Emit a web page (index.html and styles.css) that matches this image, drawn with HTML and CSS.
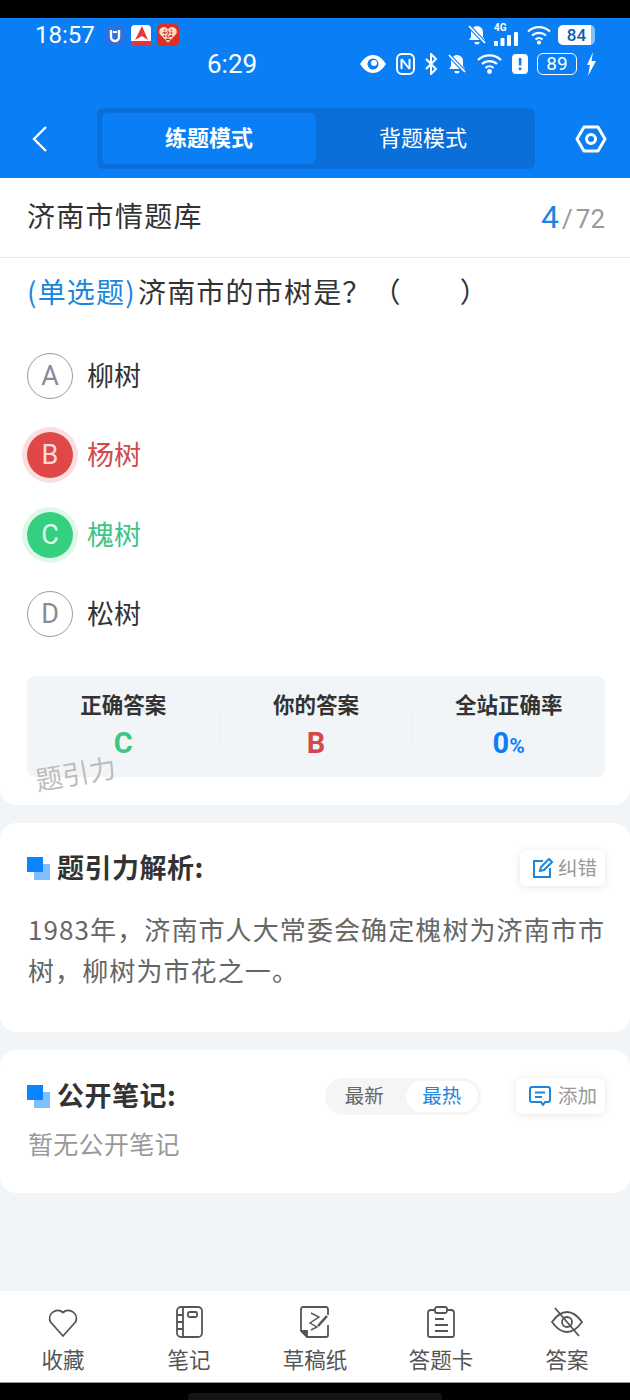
FILE: index.html
```html
<!DOCTYPE html>
<html lang="zh">
<head>
    <meta charset="UTF-8">
    <meta name="viewport" content="width=device-width, initial-scale=1.0">
    <title>济南市情题库</title>
    <link rel="stylesheet" href="styles.css">
</head>
<body>
    <div class="bar-black"></div>

    <header class="header">
        <div class="status status-one">
            <span class="time">18:57</span>
            <svg class="app" viewBox="0 0 20 20"><rect width="20" height="20" rx="5" fill="#2f6fe0"/><path d="M6 5v7a4 4 0 0 0 8 0V5" fill="none" stroke="#fff" stroke-width="2.4"/><path d="M8 7h4" stroke="#fff" stroke-width="2"/></svg>
            <svg class="app" viewBox="0 0 20 20"><rect width="20" height="20" rx="4" fill="#fff"/><path d="M11 1l6 14-6-4-7 4z" fill="#e8343c"/><rect y="16" width="20" height="4" fill="#e8343c"/></svg>
            <svg class="app app-wide" viewBox="0 0 20 20"><rect width="20" height="20" rx="4" fill="#dc2f22"/><path d="M10 17L2.500 9a4 4 0 0 1 7.500-4 4 4 0 0 1 7.500 4z" fill="#f8dcc8"/><path d="M5 8h10M6 11h8M8 14h4M7 5v7M10 6v10M13 5v7" stroke="#c0281c" stroke-dasharray="1.500 1"/></svg>
            <span class="spacer"></span>
            <svg class="ico bell-one" width="20" height="22" viewBox="0 0 20 22"><path d="M10 2a6 6 0 0 0-6 6v5l-2 3h16l-2-3V8a6 6 0 0 0-6-6zM7.500 18a2.500 2.500 0 0 0 5 0z" fill="#fff"/><path d="M2 2l16 17" stroke="#0a7ff5" stroke-width="4"/><path d="M2 2l16 17" stroke="#fff" stroke-width="1.800"/></svg>
            <span class="signal">
                <span class="net">4G</span>
                <svg width="24" height="14" viewBox="0 0 24 14" fill="#fff"><rect y="9" width="4" height="5" rx="1"/><rect x="6.500" y="6" width="4" height="8" rx="1"/><rect x="13" y="3" width="4" height="11" rx="1"/><rect x="20" y="0" width="4" height="14" rx="1"/></svg>
            </span>
            <svg class="ico" width="26" height="20" viewBox="0 0 26 20" fill="none" stroke="#fff" stroke-width="2.200"><path d="M2 6.500a16 16 0 0 1 22 0"/><path d="M6 10.500a10.500 10.500 0 0 1 14 0"/><path d="M9.500 14.500a5 5 0 0 1 7 0"/><circle cx="13" cy="17.500" r="1" fill="#fff"/></svg>
            <span class="batt-one">84</span>
        </div>

        <div class="status status-two">
            <span class="time-two">6:29</span>
            <span class="spacer"></span>
            <svg class="ico" width="28" height="20" viewBox="0 0 28 20"><path d="M1 10c4-6 8-9 13-9s9 3 13 9c-4 6-8 9-13 9S5 16 1 10z" fill="#fff"/><circle cx="14" cy="10" r="5.500" fill="#0a7ff5"/><circle cx="15" cy="9" r="3" fill="#fff"/></svg>
            <svg class="ico" width="19" height="22" viewBox="0 0 19 22"><rect x="1" y="1" width="17" height="20" rx="5" fill="none" stroke="#fff" stroke-width="2"/><path d="M5.500 6v10M13.500 6v10M5.500 6l8 10" fill="none" stroke="#fff" stroke-width="2"/></svg>
            <svg class="ico" width="14" height="22" viewBox="0 0 14 22" fill="none" stroke="#fff" stroke-width="2"><path d="M2 6l10 10-5 5V1l5 5L2 16"/></svg>
            <svg class="ico" width="20" height="22" viewBox="0 0 20 22"><path d="M10 2a6 6 0 0 0-6 6v5l-2 3h16l-2-3V8a6 6 0 0 0-6-6zM7.500 18a2.500 2.500 0 0 0 5 0z" fill="#fff"/><path d="M2 2l16 17" stroke="#0a7ff5" stroke-width="4"/><path d="M2 2l16 17" stroke="#fff" stroke-width="1.800"/></svg>
            <svg class="ico" width="27" height="22" viewBox="0 0 27 22" fill="none" stroke="#fff" stroke-width="2.200"><path d="M2 7a16.500 16.500 0 0 1 23 0"/><path d="M6 11a11 11 0 0 1 15 0"/><path d="M9.500 15a5.500 5.500 0 0 1 8 0"/><circle cx="13.500" cy="18.500" r="1.300" fill="#fff"/></svg>
            <svg class="ico" width="16" height="20" viewBox="0 0 16 20"><path d="M4 0h8a4 4 0 0 1 4 4v12a4 4 0 0 1-4 4H4a4 4 0 0 1-4-4V4a4 4 0 0 1 4-4z" fill="#fff"/><rect x="6.800" y="4" width="2.600" height="7.500" fill="#0a7ff5"/><rect x="6.800" y="13.500" width="2.600" height="2.600" fill="#0a7ff5"/></svg>
            <span class="batt-two">89</span>
            <svg class="bolt" width="12" height="24" viewBox="0 0 12 24"><path d="M8 0L2 13h3l-2 11 8-15H6.500z" fill="#fff"/></svg>
        </div>

        <nav class="nav">
            <svg class="back" width="17" height="28" viewBox="0 0 17 28" fill="none" stroke="#fff" stroke-width="2.400"><path d="M15 2L3 14l12 12"/></svg>
            <div class="mode">
                <div class="mode-item active">练题模式</div>
                <div class="mode-item">背题模式</div>
            </div>
            <svg class="gear" width="32" height="28" viewBox="0 0 32 28" fill="none" stroke="#fff" stroke-width="3"><path d="M9 2h14l7 12-7 12H9L2 14z" stroke-linejoin="round"/><circle cx="16" cy="14" r="4.500"/></svg>
        </nav>
    </header>

    <main class="content">
        <section class="card card-question">
            <div class="title-row">
                <span class="title">济南市情题库</span>
                <span class="count"><b>4</b><i>/</i>72</span>
            </div>
            <p class="question"><span class="qtype">(单选题)</span>济南市的市树是？<span class="blank">（</span><span class="blank-end">）</span></p>

            <div class="option">
                <span class="letter">A</span><span class="opt-text">柳树</span>
            </div>
            <div class="option wrong">
                <span class="letter">B</span><span class="opt-text">杨树</span>
            </div>
            <div class="option right">
                <span class="letter">C</span><span class="opt-text">槐树</span>
            </div>
            <div class="option">
                <span class="letter">D</span><span class="opt-text">松树</span>
            </div>

            <div class="result">
                <div class="result-col">
                    <span class="result-label">正确答案</span>
                    <span class="result-value green">C</span>
                </div>
                <div class="result-col">
                    <span class="result-label">你的答案</span>
                    <span class="result-value red">B</span>
                </div>
                <div class="result-col">
                    <span class="result-label">全站正确率</span>
                    <span class="result-value blue">0<small>%</small></span>
                </div>
                <span class="watermark">题引力</span>
            </div>
        </section>

        <section class="card card-analysis">
            <div class="head">
                <span class="squares"></span>
                <h2>题引力解析:</h2>
                <span class="spacer"></span>
                <span class="mini-btn">
                    <svg width="21" height="21" viewBox="0 0 21 21" fill="none" stroke="#1c86dc" stroke-width="2"><path d="M11 3H2v16h16v-9"/><path d="M8 13l1-4 8-8 3 3-8 8z"/></svg>
                    <span class="mini-label">纠错</span>
                </span>
            </div>
            <p class="analysis">1983年，济南市人大常委会确定槐树为济南市市树，柳树为市花之一。</p>
        </section>

        <section class="card card-notes">
            <div class="head">
                <span class="squares"></span>
                <h2>公开笔记:</h2>
                <span class="spacer"></span>
                <div class="sort">
                    <span class="sort-item">最新</span>
                    <span class="sort-item on">最热</span>
                </div>
                <span class="mini-btn add-btn">
                    <svg width="22" height="20" viewBox="0 0 22 20" fill="none" stroke="#1c86dc" stroke-width="2"><path d="M3 1h16a2 2 0 0 1 2 2v11a2 2 0 0 1-2 2h-3l-2 3-2-3H3a2 2 0 0 1-2-2V3a2 2 0 0 1 2-2z"/><path d="M6 6.500h10M6 11h7"/></svg>
                    <span class="mini-label">添加</span>
                </span>
            </div>
            <p class="empty">暂无公开笔记</p>
        </section>
    </main>

    <footer class="tabbar">
        <div class="tab">
            <svg width="32" height="32" viewBox="0 0 32 32" fill="none" stroke="#555" stroke-width="1.800"><path d="M16 30L3.500 16A8 8 0 0 1 16 6.500 8 8 0 0 1 28.500 16z" stroke-linejoin="round"/></svg>
            <span>收藏</span>
        </div>
        <div class="tab">
            <svg width="32" height="32" viewBox="0 0 32 32" fill="none" stroke="#555" stroke-width="1.800"><rect x="4" y="1" width="25" height="30" rx="4"/><path d="M10 1v30M4 9h6M4 16h6M4 23h6"/><rect x="15" y="6" width="9" height="5" rx="1.500"/></svg>
            <span>笔记</span>
        </div>
        <div class="tab">
            <svg width="32" height="32" viewBox="0 0 32 32" fill="none" stroke="#555" stroke-width="1.800"><path d="M29 9V3a2 2 0 0 0-2-2H4a2 2 0 0 0-2 2v22l6 6h19a2 2 0 0 0 2-2V19"/><path d="M3 25h5v5z" fill="#555"/><path d="M12 7l8 4-9 6 7 4-6 3" stroke-width="1.400"/><path d="M19 20l9-10" stroke-width="2.600"/></svg>
            <span>草稿纸</span>
        </div>
        <div class="tab">
            <svg width="32" height="32" viewBox="0 0 32 32" fill="none" stroke="#555" stroke-width="1.800"><path d="M10 4H6a3 3 0 0 0-3 3v22a2 2 0 0 0 2 2h22a2 2 0 0 0 2-2V7a3 3 0 0 0-3-3h-4"/><rect x="10" y="1" width="12" height="6" rx="2"/><path d="M10 13h9M10 19h13M10 25h13"/></svg>
            <span>答题卡</span>
        </div>
        <div class="tab">
            <svg width="34" height="32" viewBox="0 0 34 32" fill="none" stroke="#555" stroke-width="1.800"><path d="M2 16C7 9 11 6 17 6s10 3 15 10c-5 7-9 10-15 10S7 23 2 16z"/><circle cx="17" cy="16" r="5"/><path d="M5 2l24 28"/></svg>
            <span>答案</span>
        </div>
    </footer>

    <div class="bar-bottom"><span class="home"></span></div>
</body>
</html>
```

FILE: styles.css
```css
* {
    box-sizing: border-box;
}

body {
    margin: 0;
    width: 630px;
    height: 1400px;
    display: flex;
    flex-direction: column;
    background-color: #f2f5f8;
    font-family: "Noto Sans CJK SC", "Noto Sans", sans-serif;
    color: #333;
    overflow: hidden;
}

svg {
    display: block;
    flex-shrink: 0;
}

.spacer {
    flex: 1;
}

.bar-black {
    height: 18px;
    background-color: #000;
}

.header {
    height: 160px;
    background-color: #0a7ff5;
    color: #fff;
}

.status {
    display: flex;
    align-items: center;
}

.status-one {
    height: 32px;
    padding: 1px 35px 0 35px;
    gap: 6px;
}

.time {
    font-family: Roboto, sans-serif;
    font-size: 24px;
    margin-right: 4px;
}

.app {
    width: 20px;
    height: 20px;
}

.app-wide {
    width: 22px;
    height: 22px;
}

.bell-one {
    margin-right: 0;
}

.signal {
    display: flex;
    flex-direction: column;
    align-items: flex-start;
    margin: 0 2px 0 1px;
}

.net {
    font-family: Roboto, sans-serif;
    font-size: 10px;
    font-weight: 700;
    line-height: 8px;
}

.batt-one {
    width: 37px;
    height: 20px;
    border-radius: 5px;
    background: linear-gradient(90deg, #fff 90%, rgba(255, 255, 255, 0.5) 90%);
    color: #0a5cb5;
    font-family: Roboto, sans-serif;
    font-size: 17px;
    font-weight: 500;
    line-height: 20px;
    text-align: center;
}

.status-two {
    height: 28px;
    padding: 0 33px 0 207px;
    gap: 9px;
}

.time-two {
    font-family: Roboto, sans-serif;
    font-size: 26px;
}

.batt-two {
    width: 40px;
    height: 22px;
    border: 1.5px solid #fff;
    border-radius: 6px;
    font-family: Roboto, sans-serif;
    font-size: 19px;
    line-height: 19px;
    text-align: center;
}

.bolt {
    margin-left: -1px;
}

.nav {
    display: flex;
    align-items: center;
    height: 61px;
    margin-top: 30px;
    padding: 0 23px 0 31px;
}

.back {
    margin-right: 49px;
}

.mode {
    display: flex;
    width: 438px;
    height: 61px;
    padding: 5px;
    border-radius: 6px;
    background-color: #0a6fd8;
}

.mode-item {
    width: 214px;
    border-radius: 6px;
    font-size: 22px;
    line-height: 46px;
    text-align: center;
}

.mode-item.active {
    background-color: #0a7ff5;
    font-weight: 700;
}

.gear {
    margin-left: auto;
}

.content {
    flex: 1;
}

.card {
    background-color: #fff;
    border-radius: 16px;
}

.card-question {
    height: 627px;
    border-radius: 0 0 16px 16px;
}

.title-row {
    display: flex;
    justify-content: space-between;
    align-items: center;
    height: 80px;
    padding: 0 25px 0 27px;
    border-bottom: 1px solid #e6e6e6;
}

.title {
    margin-bottom: 5px;
    font-size: 28px;
    letter-spacing: 1.3px;
}

.count {
    margin-bottom: 2px;
    font-family: Roboto, sans-serif;
    font-size: 26px;
    color: #999;
}

.count b {
    font-size: 32px;
    font-weight: 400;
    color: #1c86dc;
}

.count i {
    margin: 0 3px;
    font-style: normal;
}

.question {
    height: 78px;
    margin: 0;
    padding: 13px 27px 0;
    font-size: 28px;
    line-height: 40px;
    letter-spacing: 1.2px;
    white-space: nowrap;
}

.qtype {
    margin-right: 2px;
    color: #1c86dc;
}

.blank {
    margin-left: 1px;
}

.blank-end {
    margin-left: 58px;
}

.option {
    display: flex;
    align-items: center;
    height: 79.5px;
    padding-left: 27px;
    font-size: 27px;
}

.opt-text {
    margin-bottom: 3px;
}

.letter {
    width: 46px;
    height: 46px;
    margin-right: 14px;
    border: 1.5px solid #9a9aa8;
    border-radius: 50%;
    color: #8a8a98;
    font-family: Roboto, sans-serif;
    font-size: 27px;
    line-height: 45px;
    text-align: center;
}

.wrong .letter {
    border: 0;
    background-color: #e04848;
    box-shadow: 0 0 0 5px #f9dfdf;
    color: #fbdcdc;
    line-height: 47px;
}

.wrong .opt-text {
    color: #d04a4a;
}

.right .letter {
    border: 0;
    background-color: #35d07f;
    box-shadow: 0 0 0 5px #dff8ea;
    color: #e0fbee;
    line-height: 47px;
}

.right .opt-text {
    color: #3cc583;
}

.result {
    position: relative;
    display: flex;
    height: 101px;
    margin: 22px 25px 0 27px;
    border-radius: 8px;
    background-color: #f2f5f8;
}

.result-col {
    flex: 1;
    display: flex;
    flex-direction: column;
    align-items: center;
    padding-top: 12px;
}

.result-col + .result-col {
    background: linear-gradient(#e9edf1, #e9edf1) 0 35px / 1px 36px no-repeat;
}

.result-label {
    font-size: 21.5px;
    font-weight: 700;
    line-height: 32px;
}

.result-value {
    margin-top: 5px;
    font-family: Roboto, sans-serif;
    font-size: 29px;
    font-weight: 700;
    line-height: 36px;
}

.result-value small {
    font-size: 21px;
}

.green {
    color: #3cc583;
}

.red {
    color: #d04a4a;
}

.blue {
    color: #0a7ff5;
}

.watermark {
    position: absolute;
    left: 8px;
    top: 82px;
    color: #bdbdbd;
    font-size: 27px;
    line-height: 30px;
    transform: rotate(-10deg);
}

.card-analysis {
    height: 209px;
    margin-top: 18px;
    padding: 27px 25px 0 27px;
}

.card-notes {
    height: 143px;
    margin-top: 18px;
    padding: 28px 25px 0 27px;
}

.head {
    display: flex;
    align-items: center;
    height: 36px;
}

.head h2 {
    margin: 0 0 2px 7px;
    font-size: 27px;
    font-weight: 700;
    line-height: 36px;
    letter-spacing: .5px;
}

.squares {
    width: 23px;
    height: 23px;
    background: linear-gradient(#0a84ff, #0a84ff) 0 0 / 16px 15px no-repeat,
        linear-gradient(#7fbfff, #7fbfff) 7px 7px / 16px 16px no-repeat;
}

.mini-btn {
    display: flex;
    align-items: center;
    gap: 5px;
    width: 85px;
    height: 36px;
    padding-left: 12px;
    border-radius: 6px;
    background-color: #fff;
    box-shadow: 0 1px 8px rgba(0, 0, 0, 0.1);
    color: #999;
    font-size: 19.5px;
}

.mini-label {
    margin-bottom: 3px;
}

.analysis {
    margin: 22px -6px 0 1px;
    color: #666;
    font-size: 26px;
    line-height: 41px;
    letter-spacing: 1.1px;
}

.sort {
    display: flex;
    width: 156px;
    height: 37px;
    margin-right: 35px;
    padding: 3px;
    border-radius: 19px;
    background-color: #f5f5f5;
}

.sort-item {
    flex: 1;
    padding-right: 5px;
    border-radius: 16px;
    color: #666;
    font-size: 19.5px;
    line-height: 28px;
    text-align: center;
}

.sort-item.on {
    padding-right: 0;
    background-color: #fff;
    color: #1c86dc;
}

.add-btn {
    width: 89px;
    gap: 7px;
    padding-left: 13px;
}

.empty {
    margin: 11px 0 0 1px;
    color: #999;
    font-size: 25px;
    line-height: 36px;
    letter-spacing: .3px;
}

.tabbar {
    display: flex;
    height: 92px;
    background-color: #fff;
    border-bottom: 1px solid #999;
}

.tab {
    flex: 1;
    display: flex;
    flex-direction: column;
    align-items: center;
    justify-content: flex-end;
    gap: 6px;
    padding-bottom: 8px;
    color: #555;
    font-size: 21.5px;
    line-height: 30px;
}

.bar-bottom {
    display: flex;
    justify-content: center;
    align-items: flex-end;
    height: 17px;
    background-color: #000;
}

.home {
    width: 254px;
    height: 7px;
    border-radius: 4px 4px 0 0;
    background-color: #141414;
}
```
